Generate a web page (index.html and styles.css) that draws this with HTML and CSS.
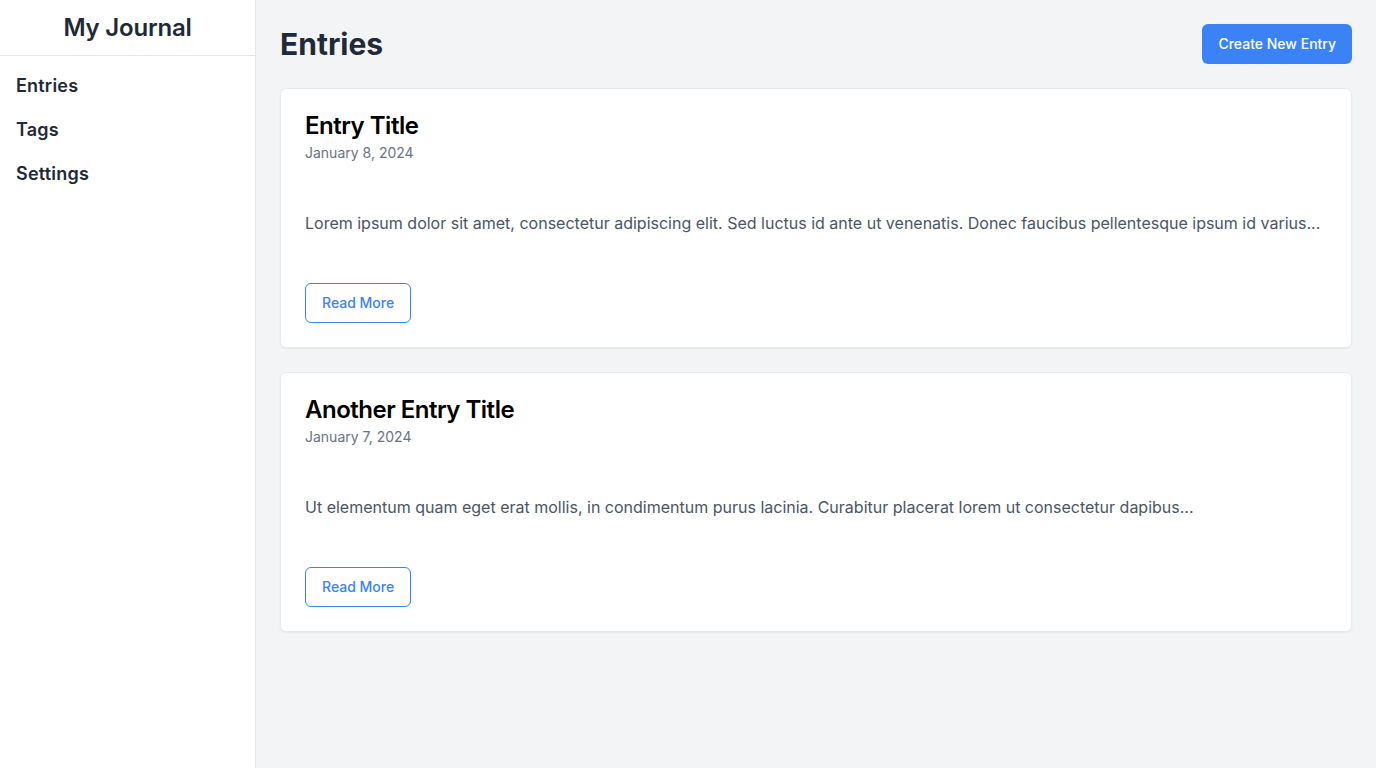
FILE: index.html
```html
<!DOCTYPE html>
<html lang="en">
<head>
<meta charset="utf-8">
<title>My Journal</title>
<link rel="stylesheet" href="styles.css">
</head>
<body>
<div class="app">
  <aside class="sidebar">
    <div class="brand">My Journal</div>
    <nav class="nav">
      <a class="nav-item" href="#">Entries</a>
      <a class="nav-item" href="#">Tags</a>
      <a class="nav-item" href="#">Settings</a>
    </nav>
  </aside>
  <main class="main">
    <header class="page-header">
      <h1 class="page-title">Entries</h1>
      <button class="btn-primary">Create New Entry</button>
    </header>
    <section class="entries">
      <article class="card">
        <h2 class="card-title">Entry Title</h2>
        <div class="card-date">January 8, 2024</div>
        <p class="card-text">Lorem ipsum dolor sit amet, consectetur adipiscing elit. Sed luctus id ante ut venenatis. Donec faucibus pellentesque ipsum id varius...</p>
        <div><button class="btn-outline">Read More</button></div>
      </article>
      <article class="card">
        <h2 class="card-title">Another Entry Title</h2>
        <div class="card-date">January 7, 2024</div>
        <p class="card-text">Ut elementum quam eget erat mollis, in condimentum purus lacinia. Curabitur placerat lorem ut consectetur dapibus...</p>
        <div><button class="btn-outline">Read More</button></div>
      </article>
    </section>
  </main>
</div>
</body>
</html>
```

FILE: styles.css
```css
* { box-sizing: border-box; }
html, body { margin: 0; padding: 0; height: 100%; }
body {
  font-family: Inter, "Noto Sans", "Liberation Sans", sans-serif;
  background: #f3f4f6;
  color: #1f2937;
}
.app { display: flex; min-height: 100vh; }
.sidebar {
  width: 256px;
  flex-shrink: 0;
  background: #ffffff;
  border-right: 1px solid #e5e7eb;
}
.brand {
  height: 56px;
  display: flex;
  align-items: center;
  justify-content: center;
  border-bottom: 1px solid #e5e7eb;
  font-size: 24px;
  font-weight: 600;
  line-height: 32px;
  letter-spacing: -0.2px;
  color: #1f2937;
}
.nav { display: flex; flex-direction: column; padding: 8px 0; }
.nav-item {
  display: block;
  padding: 8px 16px;
  font-size: 18px;
  line-height: 28px;
  font-weight: 600;
  letter-spacing: 0.2px;
  color: #1f2937;
  text-decoration: none;
}
.main { flex: 1; padding: 24px; }
.page-header {
  display: flex;
  align-items: center;
  justify-content: space-between;
  margin-bottom: 24px;
}
.page-title {
  margin: 0;
  font-size: 30px;
  line-height: 36px;
  font-weight: 700;
  color: #1f2937;
}
.btn-primary {
  font-family: inherit;
  background: #3b82f6;
  color: #ffffff;
  border: none;
  border-radius: 6px;
  padding: 10px 16px;
  font-size: 14px;
  line-height: 20px;
  font-weight: 500;
}
.entries { display: flex; flex-direction: column; gap: 24px; }
.card {
  background: #ffffff;
  border: 1px solid #e8eaee;
  border-radius: 6px;
  padding: 24px;
  box-shadow: 0 1px 2px rgba(0,0,0,0.05);
}
.card-title {
  margin: 0;
  font-size: 24px;
  line-height: 26px;
  font-weight: 600;
  letter-spacing: -0.5px;
  color: #000000;
}
.card-date {
  margin-top: 3px;
  font-size: 14px;
  line-height: 21px;
  color: #6b7280;
}
.card-text {
  margin: 48px 0;
  font-size: 16px;
  line-height: 24px;
  color: #4b5563;
}
.btn-outline {
  font-family: inherit;
  background: #ffffff;
  color: #3b82f6;
  border: 1px solid #3b82f6;
  border-radius: 6px;
  padding: 9px 16px;
  font-size: 14px;
  line-height: 20px;
  font-weight: 500;
}
```
